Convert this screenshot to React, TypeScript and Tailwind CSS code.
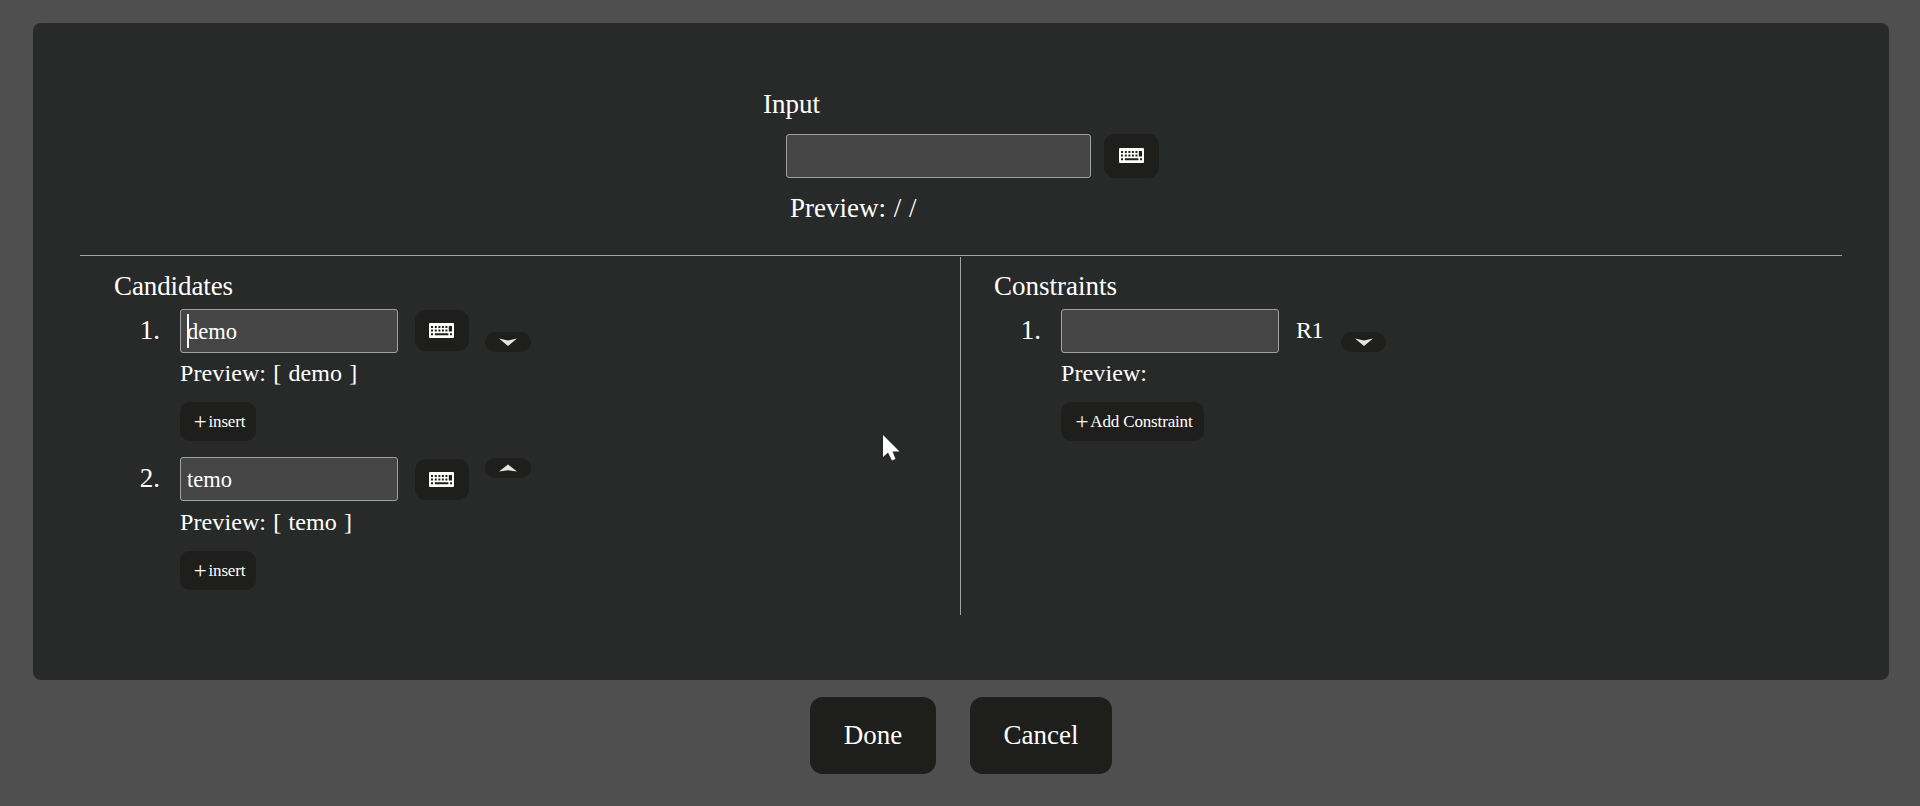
import React from "react";

function Keyboard() {
  return (
    <svg width="25" height="15" viewBox="0 0 25 15" className="shrink-0">
      <rect width="25" height="15" rx="1" fill="#fff" />
      <g fill="#1e1e1c">
        <path d="M2 3h2v2H2zM5.8 3h2v2h-2zM9.4 3h2v2h-2zM12.9 3h2v2h-2zM16.4 3h2v2h-2z" />
        <path d="M2 6.4h2v2H2zM5.8 6.4h2v2h-2zM9.4 6.4h2v2h-2zM12.9 6.4h2v2h-2zM16.4 6.4h2v2h-2z" />
        <path d="M19.8 3h3.2v5.4h-3.2zM2 10.2h2v2H2zM5.8 10.2h13.6v2H5.8zM21 10.2h2v2h-2z" />
      </g>
    </svg>
  );
}

function Chevron({ up = false }: { up?: boolean }) {
  return (
    <svg width="18" height="8" viewBox="0 0 18 8" className={up ? "shrink-0" : "shrink-0 -scale-y-100"}>
      <path d={up ? "M0 7.5L9 0.5L18 7.5L9 6.2Z" : "M0 7.5L9 0L18 7.5L9 5.5Z"} fill="#e4e4e4" />
    </svg>
  );
}

const field = "h-11 shrink-0 rounded-[3px] border border-[#a0a2a1] bg-[#444544]";
const number = "absolute right-full mr-[20px] mt-[5px] text-[27px] leading-[32px]";
const smallButton =
  "flex h-[39px] items-center justify-center rounded-[10px] bg-[#1e1e1c] pl-[3px] text-[17px] tracking-[-0.15px]";

function Candidate({ n, text, up }: { n: string; text: string; up?: boolean }) {
  return (
    <div className="pl-[100px]">
      <div className="relative flex h-11 items-start">
        <span className={number}>{n}</span>
        <div className={`${field} relative flex w-[218px] items-center pl-[6px] pt-[2px] text-[22.5px]`}>
          {text}
          {!up && <span className="absolute left-[6px] top-1 h-[34px] w-[2px] bg-white" />}
        </div>
        <div className={`${up ? "mt-[2px]" : "mt-[1px]"} ml-[17px] flex h-[41px] w-[54px] items-center rounded-[11px] bg-[#1e1e1c] pl-[14px]`}>
          <Keyboard />
        </div>
        <div className={`${up ? "mt-[1px]" : "mt-[23px]"} ml-[16px] flex h-5 w-[46px] items-center justify-center rounded-full bg-[#1e1e1c]`}>
          <Chevron up={up} />
        </div>
      </div>
      <div className={`${up ? "mt-[5px]" : "mt-[4px]"} whitespace-pre text-[24px] leading-[32px] tracking-[0.1px] [word-spacing:1px]`}>
        Preview: [ {text} ]
      </div>
      <div className={`${smallButton} mt-[13px] w-[76px]`}>
        <span className="mr-[2px] text-[23px] leading-none">+</span>
        insert
      </div>
    </div>
  );
}

export default function App() {
  return (
    <div className="relative flex h-[806px] w-[1920px] flex-col overflow-hidden bg-[#4f4f4f] pl-[33px] pt-[23px] font-['Liberation_Serif',serif] text-white">
      <main className="h-[657px] w-[1856px] shrink-0 rounded-lg bg-[#282a29] px-[47px]">
        <section className="h-[232px] pl-[683px] pt-[64px]">
          <h2 className="text-[27px] leading-[34px]">Input</h2>
          <div className="ml-[23px] mt-[13px] flex">
            <div className={`${field} w-[305px]`} />
            <div className="ml-[13px] flex h-11 w-[55px] items-center justify-center rounded-[11px] bg-[#1e1e1c] pb-[1px]">
              <Keyboard />
            </div>
          </div>
          <div className="ml-[27px] mt-[13px] text-[27px] leading-[34px] [word-spacing:1px]">Preview: / /</div>
        </section>
        <div className="h-px bg-[#a3a3a3]" />
        <div className="mt-px flex">
          <section className="h-[358px] w-[880px] pt-[12px]">
            <h2 className="pl-[34px] text-[27px] leading-[34px] tracking-[-0.1px]">Candidates</h2>
            <div className="mt-[6px] flex flex-col gap-4">
              <Candidate n="1." text="demo" />
              <Candidate n="2." text="temo" up />
            </div>
          </section>
          <section className="h-[358px] flex-1 border-l border-[#a3a3a3] pl-[33px] pt-[12px]">
            <h2 className="text-[27px] leading-[34px]">Constraints</h2>
            <div className="mt-[6px] pl-[67px]">
              <div className="relative flex h-11 items-start">
                <span className={number}>1.</span>
                <div className={`${field} w-[218px]`} />
                <span className="ml-[17px] mt-[5px] w-[28px] text-[24px] leading-[32px] tracking-[-0.5px]">R1</span>
                <div className="ml-[17px] mt-[23px] flex h-5 w-[45px] items-center justify-center rounded-full bg-[#1e1e1c]">
                  <Chevron />
                </div>
              </div>
              <div className="mt-[4px] text-[24px] leading-[32px] tracking-[0.1px]">Preview:</div>
              <div className={`${smallButton} mt-[13px] w-[143px]`}>
                <span className="mr-[2px] text-[23px] leading-none">+</span>
                Add Constraint
              </div>
            </div>
          </section>
        </div>
      </main>
      <footer className="ml-[777px] mt-[17px] flex gap-[34px] text-[27px]">
        <button className="h-[77px] w-[126px] rounded-[13px] bg-[#1e1e1c]">Done</button>
        <button className="h-[77px] w-[142px] rounded-[13px] bg-[#1e1e1c]">Cancel</button>
      </footer>
      <svg className="absolute left-[882px] top-[434px]" width="20" height="28" viewBox="0 0 20 28">
        <path d="M1 1V23L6 18.5L10 26.5L13.5 25L10.5 17.5H17.5Z" fill="#fff" />
      </svg>
    </div>
  );
}
